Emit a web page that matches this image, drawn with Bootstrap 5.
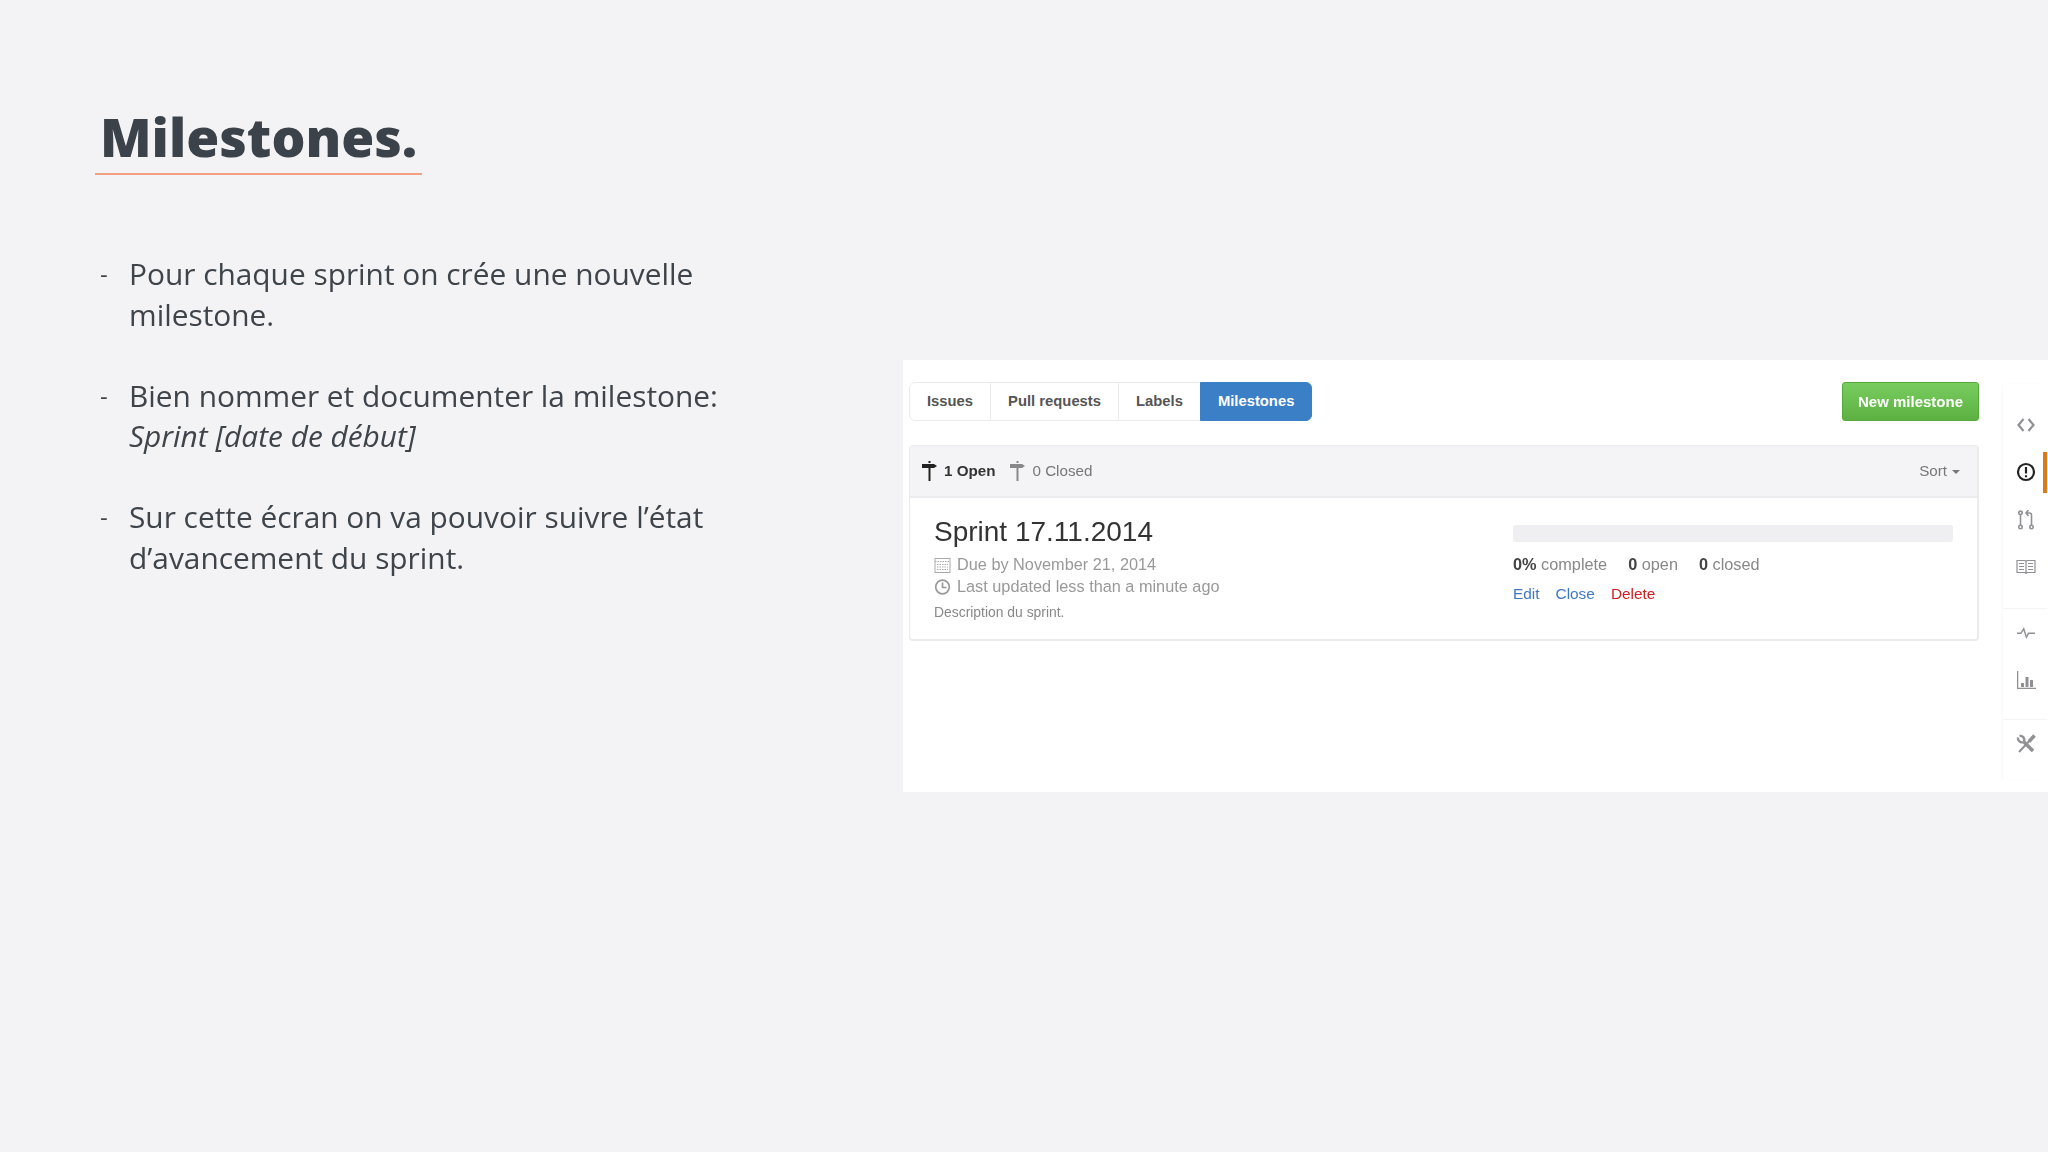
<!DOCTYPE html>
<html lang="fr">
<head>
    <meta charset="UTF-8">
    <title>Milestones</title>
    <link rel="stylesheet" href="https://cdn.jsdelivr.net/npm/bootstrap@5.3.0/dist/css/bootstrap.min.css">
    <style>
        html, body { height: 100%; }
        body { background: #f3f3f5; color: #3f444a; font-family: "Open Sans", sans-serif; overflow: hidden; }
        .slide { height: 1152px; filter: blur(.4px); }
        .slide-text { width: 903px; padding: 96px 0 0 95px; flex: none; }
        .slide-title { display: block; font-family: "Open Sans", sans-serif; font-size: 53.4px; font-weight: 800; line-height: 78px; margin: 0 0 79px; padding: 2px 0 0 5px; height: 79px; width: 327px; color: #3c4249; border-bottom: 2px solid #f29f82; }
        .points { list-style: none; margin: 0; padding: 0 0 0 34px; width: 730px; font-size: 29.850px; font-weight: 400; line-height: 40.500px; }
        .points li { position: relative; margin-bottom: 40.500px; }
        .points li::before { content: "-"; position: absolute; left: -29px; font-size: 24px; }
        .shot-wrap { flex: 1; padding-top: 360px; }
        .shot { height: 432px; background: #fff; font-family: "Liberation Sans", Arial, sans-serif; }
        .shot-main { width: 1076px; padding: 22px 0 0 6px; flex: none; }
        .tabs .btn { height: 39px; padding: 0 17px; font-size: 14.800px; font-weight: 700; line-height: 37px; color: #555; background: #fff; border: 1px solid #ebebed; --bs-border-radius: 4px; }
        .tabs .btn.on { background: #3b80c6; border-color: #3b80c6; color: #fff; }
        .btn-new { height: 39px; width: 137px; padding: 0; font-size: 15px; font-weight: 700; line-height: 37px; color: #fff; background: linear-gradient(#79cc5f, #5db142); border: 1px solid #55a83c; border-radius: 3px; }
        .ms-card { margin-top: 24px; height: 196px; border: 1px solid #ebebed; border-width: 1px 2px 2px 1px; border-radius: 4px; }
        .ms-head { height: 52px; padding: 0 17px 0 12px; background: #f4f4f6; border-bottom: 2px solid #ececee; font-size: 15.200px; color: #777; }
        .ms-head b { color: #333; margin-right: 15px; }
        .ms-head svg { margin-right: 7px; }
        .sort-caret { display: inline-block; margin-left: 5px; vertical-align: 2px; border: 4px solid transparent; border-top-color: #777; border-bottom: 0; }
        .ms-body { padding: 16px 0 0 24px; }
        .ms-left { width: 579px; flex: none; }
        .ms-name { font-size: 28px; line-height: 36px; margin: 0 0 3px; font-weight: 400; color: #333; }
        .ms-meta { font-size: 16.300px; line-height: 22px; color: #999; }
        .ms-meta svg { width: 18px; margin-right: 5px; vertical-align: -3px; }
        .ms-desc { font-size: 13.900px; line-height: 18px; margin-top: 6px; color: #888; }
        .ms-right { width: 440px; padding-top: 11px; }
        .ms-bar { height: 17px; background: #efeff1; border-radius: 3px; }
        .ms-stats { margin-top: 12px; font-size: 16.300px; line-height: 20px; color: #888; gap: 21px; }
        .ms-stats b { color: #444; }
        .ms-links { margin-top: 10px; font-size: 15.400px; line-height: 20px; gap: 16px; }
        .ms-links a { color: #4078c0; text-decoration: none; }
        .ms-links a.del { color: #cc1f1f; }
        .rail { width: 44px; margin: 24px 0 12px 24px; padding-top: 17px; flex: none; box-shadow: -1px 0 2px #f8f8f9; }
        .rail-group { border-bottom: 1px solid #f4f4f6; }
        .rail-item { height: 47.500px; padding-left: 2px; }
        .rail-item svg { width: 20px; height: 20px; color: #909095; }
        .rail-item.on { height: 41px; margin: 3.250px 0; border-right: 4px solid #d97a1c; padding-left: 6px; background: #fff; }
        .rail-item.on svg { color: #222; }
    </style>
</head>
<body>
<div class="slide d-flex">
    <div class="slide-text">
        <h1 class="slide-title">Milestones.</h1>
        <ul class="points">
            <li>Pour chaque sprint on crée une nouvelle milestone.</li>
            <li>Bien nommer et documenter la milestone:<br><em>Sprint [date de début]</em></li>
            <li>Sur cette écran on va pouvoir suivre l’état d’avancement du sprint.</li>
        </ul>
    </div>
    <div class="shot-wrap">
        <div class="shot d-flex">
            <div class="shot-main">
                <div class="d-flex justify-content-between">
                    <div class="btn-group tabs">
                        <a class="btn" href="#">Issues</a>
                        <a class="btn" href="#">Pull requests</a>
                        <a class="btn" href="#">Labels</a>
                        <a class="btn on" href="#">Milestones</a>
                    </div>
                    <a class="btn btn-new" href="#">New milestone</a>
                </div>
                <div class="ms-card">
                    <div class="ms-head d-flex align-items-center">
                        <svg width="15" height="20" viewBox="0 0 15 20" fill="#222"><rect x="6.5" y="0" width="2" height="2"/><rect x="6.5" y="7" width="2" height="13"/><path d="M0 3h12l3 2-3 2H0z"/></svg>
                        <b>1 Open</b>
                        <svg width="15" height="20" viewBox="0 0 15 20" fill="#888"><rect x="6.5" y="0" width="2" height="2"/><rect x="6.5" y="7" width="2" height="13"/><path d="M0 3h12l3 2-3 2H0z"/></svg>
                        <span>0 Closed</span>
                        <span class="ms-auto">Sort<i class="sort-caret"></i></span>
                    </div>
                    <div class="ms-body d-flex">
                        <div class="ms-left">
                            <h3 class="ms-name">Sprint 17.11.2014</h3>
                            <div class="ms-meta">
                                <div><svg height="16" viewBox="0 0 18 16" fill="none" stroke="#aaa"><rect x="1" y="1.5" width="15" height="14"/><path d="M1 4.5h15M3 7.5h11M3 10h11M3 12.5h11" stroke-dasharray="1.5 1"/></svg>Due by November 21, 2014</div>
                                <div><svg height="16" viewBox="0 0 18 16" fill="none" stroke="#999" stroke-width="1.7"><circle cx="8.5" cy="8" r="6.8"/><path d="M8.5 3.5V8.5H12.5"/></svg>Last updated less than a minute ago</div>
                            </div>
                            <div class="ms-desc">Description du sprint.</div>
                        </div>
                        <div class="ms-right">
                            <div class="progress ms-bar"></div>
                            <div class="ms-stats d-flex">
                                <span><b>0%</b> complete</span>
                                <span><b>0</b> open</span>
                                <span><b>0</b> closed</span>
                            </div>
                            <div class="ms-links d-flex">
                                <a href="#">Edit</a>
                                <a href="#">Close</a>
                                <a class="del" href="#">Delete</a>
                            </div>
                        </div>
                    </div>
                </div>
            </div>
            <div class="rail">
                <div class="rail-group">
                    <div class="rail-item d-flex align-items-center justify-content-center">
                        <svg viewBox="0 0 20 20" fill="none" stroke="currentColor" stroke-width="2.200"><path d="M7.500 4 2.500 10l5 6M12.500 4l5 6-5 6"/></svg>
                    </div>
                    <div class="rail-item on d-flex align-items-center justify-content-center">
                        <svg viewBox="0 0 20 20" fill="none" stroke="currentColor" stroke-width="2.200"><circle cx="10" cy="10" r="8"/><path d="M10 5v6.500M10 13.200v2"/></svg>
                    </div>
                    <div class="rail-item d-flex align-items-center justify-content-center">
                        <svg viewBox="0 0 20 20" fill="none" stroke="currentColor" stroke-width="1.600"><circle cx="4.500" cy="2.800" r="1.700"/><circle cx="4.500" cy="17" r="1.700"/><circle cx="15.500" cy="17" r="1.700"/><path d="M4.500 4.500v10.800M15.500 15.300V5q0-2-2-2H11M12.500 0 10 3l2.500 3"/></svg>
                    </div>
                    <div class="rail-item d-flex align-items-center justify-content-center">
                        <svg viewBox="0 0 20 20" fill="none" stroke="currentColor" stroke-width="1.200"><path d="M1 3.500h8l1 1 1-1h8v12h-8l-1 1-1-1H1zM10 4.500v11M3 6.500h5M3 9.500h5M3 12.500h5M12 6.500h5M12 9.500h5M12 12.500h5"/></svg>
                    </div>
                    <div style="height:17px"></div>
                </div>
                <div class="rail-group">
                    <div class="rail-item d-flex align-items-center justify-content-center">
                        <svg viewBox="0 0 20 20" fill="currentColor"><path d="M1 9.500h3.500L8 4l2.500 8.500 1.500-3H19v1.500h-6l-2.800 5L7.500 7.500 5.200 11H1z"/></svg>
                    </div>
                    <div class="rail-item d-flex align-items-center justify-content-center">
                        <svg viewBox="0 0 20 20" fill="currentColor"><path d="M1 1h1.300v16.700H20V19H1z"/><rect x="5" y="13" width="3" height="4"/><rect x="9.500" y="7" width="3" height="10"/><rect x="14" y="10" width="3" height="7"/></svg>
                    </div>
                    <div style="height:15px"></div>
                </div>
                <div class="rail-group border-0">
                    <div class="rail-item d-flex align-items-center justify-content-center">
                        <svg viewBox="0 0 20 20" fill="none" stroke="currentColor"><path d="M18 2 3 18" stroke-width="2"/><path d="M18.500 1.500 13 7.500" stroke-width="3.500"/><path d="M7.500 7.500 17 17" stroke-width="3.600"/><path d="M2 3.500a4 4 0 0 0 5.500 4.500M3.500 2a4 4 0 0 1 4.500 5.500" stroke-width="2.400"/></svg>
                    </div>
                </div>
            </div>
        </div>
    </div>
</div>
<script src="https://cdn.jsdelivr.net/npm/bootstrap@5.3.0/dist/js/bootstrap.bundle.min.js"></script>
</body>
</html>
